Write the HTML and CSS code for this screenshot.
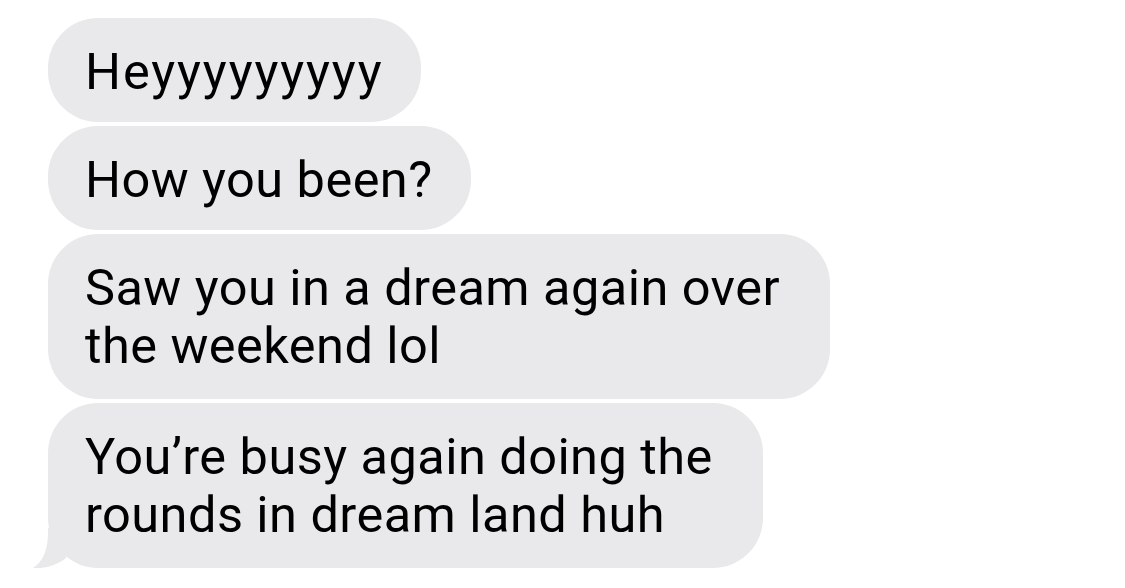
FILE: index.html
```html
<!DOCTYPE html>
<html lang="en">
<head>
<meta charset="utf-8">
<title>Messages</title>
<link rel="stylesheet" href="styles.css">
</head>
<body>
  <main class="thread">
    <div class="bubble bubble--wide">Heyyyyyyyyy</div>
    <div class="bubble">How you been?</div>
    <div class="bubble bubble--multi">Saw you in a dream again over<br>the weekend lol</div>
    <div class="bubble bubble--multi">You’re busy again doing the<br>rounds in dream land huh
      <svg class="tail" viewBox="0 0 50 40" width="50" height="40" aria-hidden="true">
        <path d="M16,0 L16,4 C16,24 10,34 1,40 C11,41 24,38 34,30 L34,0 Z" fill="#e9e9eb"/>
      </svg>
    </div>
  </main>
</body>
</html>
```

FILE: styles.css
```css
html, body {
  margin: 0;
  padding: 0;
  background: #ffffff;
}

body {
  width: 1125px;
  height: 588px;
  overflow: hidden;
  font-family: "Roboto", "Liberation Sans", sans-serif;
}

.thread {
  display: flex;
  flex-direction: column;
  align-items: flex-start;
  gap: 4px;
  padding: 18px 0 0 48px;
}

.bubble {
  position: relative;
  background: #e9e9eb;
  color: #000;
  font-size: 50.5px;
  line-height: 58px;
  letter-spacing: 0.45px;
  padding: 25px 38px 21px 37px;
  border-radius: 50px;
  white-space: nowrap;
}

.bubble--wide {
  letter-spacing: 1.9px;
}

.bubble--multi {
  padding-bottom: 24px;
  padding-right: 50px;
}

.tail {
  position: absolute;
  left: -16px;
  bottom: 0;
  display: block;
}
```
